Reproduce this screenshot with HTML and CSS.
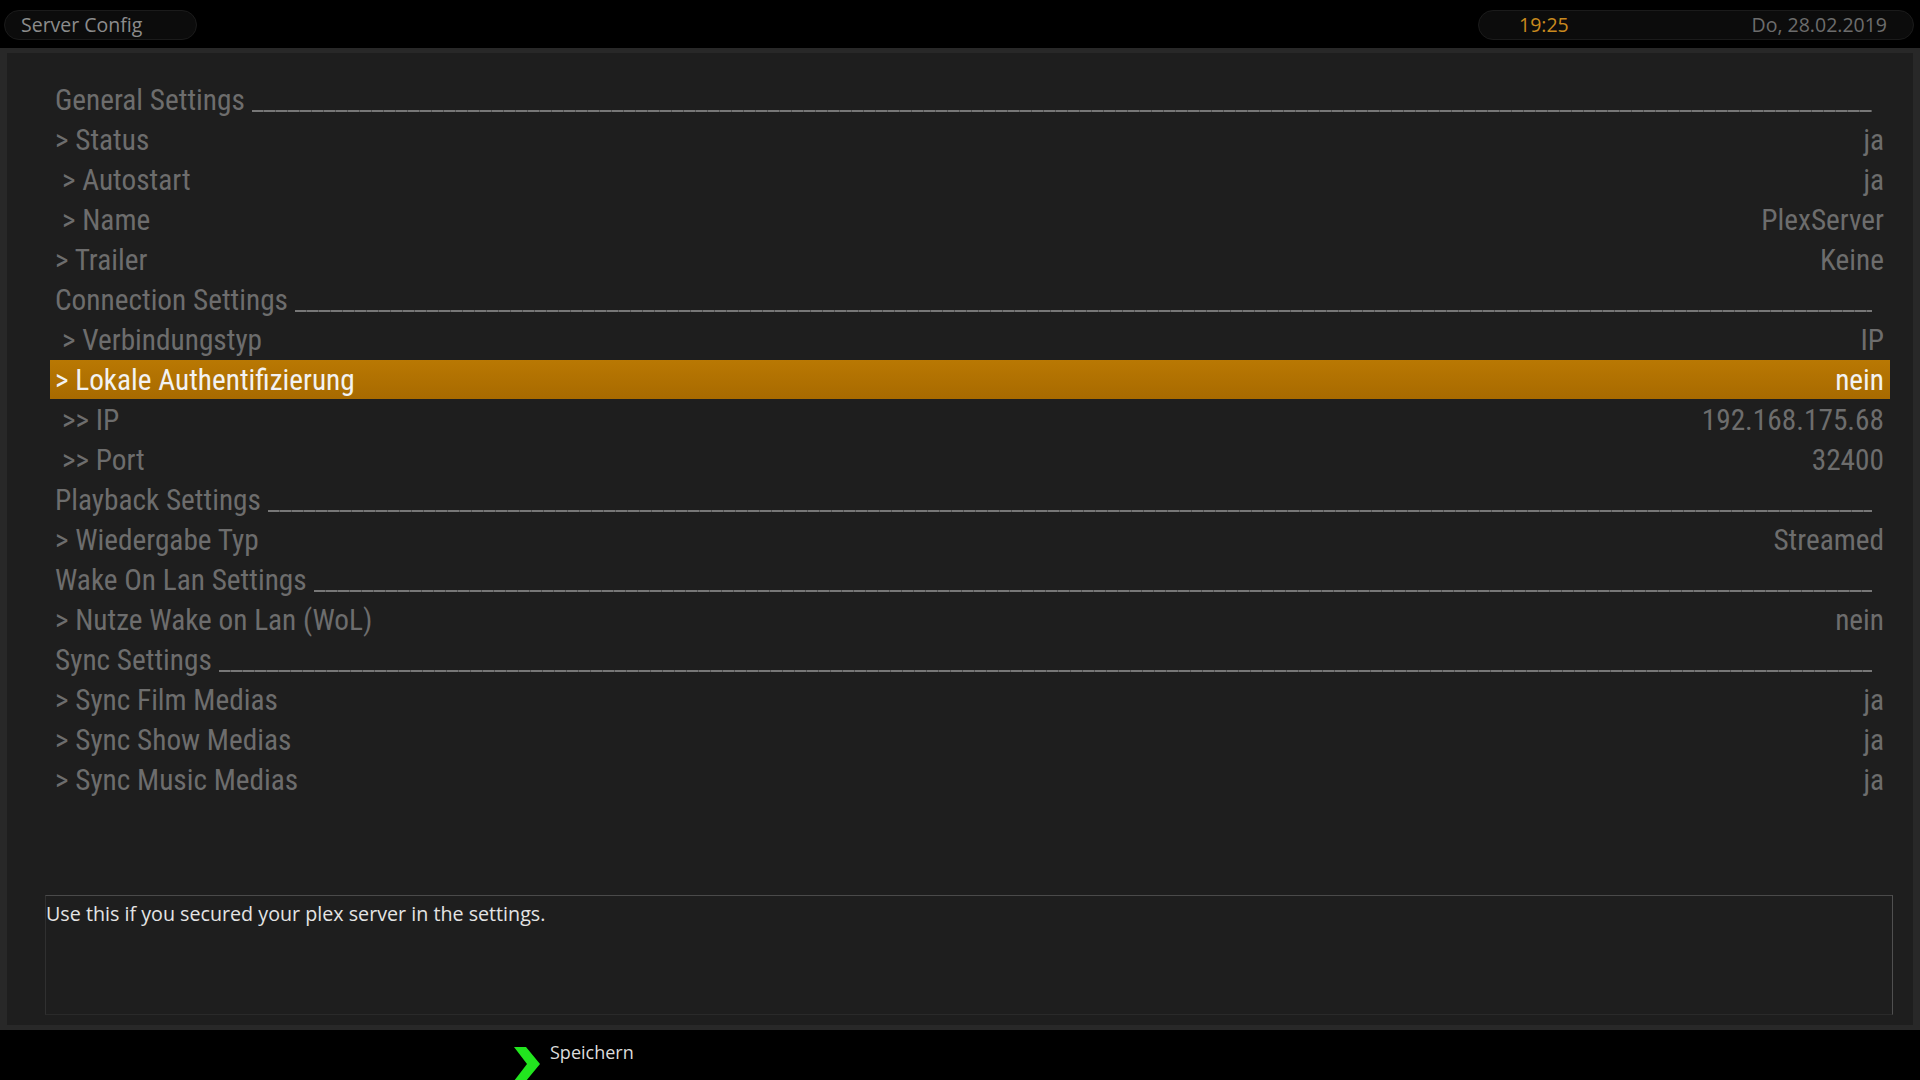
FILE: index.html
```html
<!DOCTYPE html>
<html>
	<head>
		<meta charset="UTF-8">
		<title>Server Config</title>
		<link rel="stylesheet" href="styles.css">
	</head>
	<body>
		<div class="top">
			<div class="pill title">Server Config</div>
			<div class="pill clock">
				<span class="time">19:25</span>
				<span class="date">Do, 28.02.2019</span>
			</div>
		</div>

		<div class="main">
			<div class="inner">
				<ul class="list">
					<li class="head"><span>General Settings</span><i></i></li>
					<li><span>&gt; Status</span><b>ja</b></li>
					<li class="sub"><span>&gt; Autostart</span><b>ja</b></li>
					<li class="sub"><span>&gt; Name</span><b>PlexServer</b></li>
					<li><span>&gt; Trailer</span><b>Keine</b></li>
					<li class="head"><span>Connection Settings</span><i></i></li>
					<li class="sub"><span>&gt; Verbindungstyp</span><b>IP</b></li>
					<li class="on"><span>&gt; Lokale Authentifizierung</span><b>nein</b></li>
					<li class="sub"><span>&gt;&gt; IP</span><b>192.168.175.68</b></li>
					<li class="sub"><span>&gt;&gt; Port</span><b>32400</b></li>
					<li class="head"><span>Playback Settings</span><i></i></li>
					<li><span>&gt; Wiedergabe Typ</span><b>Streamed</b></li>
					<li class="head"><span>Wake On Lan Settings</span><i></i></li>
					<li><span>&gt; Nutze Wake on Lan (WoL)</span><b>nein</b></li>
					<li class="head"><span>Sync Settings</span><i></i></li>
					<li><span>&gt; Sync Film Medias</span><b>ja</b></li>
					<li><span>&gt; Sync Show Medias</span><b>ja</b></li>
					<li><span>&gt; Sync Music Medias</span><b>ja</b></li>
				</ul>

				<div class="desc">Use this if you secured your plex server in the settings.</div>
			</div>
		</div>

		<div class="bottom">
			<svg class="arrow" width="26" height="36" viewBox="0 0 26 36">
				<polygon points="0,0 12,0 26,17 12,34 0,34 13,17" fill="#22e51f"/>
			</svg>
			<span class="save">Speichern</span>
		</div>
	</body>
</html>
```

FILE: styles.css
```css
html,body,ul,li{
	margin:0;
	padding:0;
}
li{
	list-style:none;
}
body{
	width:1920px;
	height:1080px;
	overflow:hidden;
	background:#000;
	font-family:"Open Sans","Noto Sans",sans-serif;
	display:flex;
	flex-direction:column;
}

/* top bar */
.top{
	height:48px;
	display:flex;
	justify-content:space-between;
	align-items:flex-start;
	padding:10px 6px 0 4px;
	box-sizing:border-box;
}
.pill{
	height:30px;
	box-sizing:border-box;
	border:1px solid #1b1b1b;
	background:#0c0c0c;
	border-radius:15px;
	font-size:19.5px;
	line-height:27px;
}
.title{
	width:193px;
	padding-left:16px;
	color:#8c8c8c;
}
.clock{
	width:436px;
	display:flex;
	justify-content:space-between;
	padding:0 26px 0 40px;
}
.clock .time{
	color:#c98a1e;
}
.clock .date{
	color:#6c6c6c;
}

/* main panel */
.main{
	height:982px;
	background:#282828;
	padding:5px 7px 5px 7px;
	box-sizing:border-box;
}
.inner{
	height:100%;
	background:#1e1e1e;
	display:flex;
	flex-direction:column;
	padding:27px 23px 10px 43px;
	box-sizing:border-box;
}
.list li{
	height:40px;
	display:flex;
	align-items:center;
	padding:0 6px 0 5px;
	font-family:"Roboto Condensed","Liberation Sans Narrow","DejaVu Sans Condensed",Roboto,sans-serif;
	font-stretch:condensed;
	font-size:29.3px;
	color:#6d6d6d;
	white-space:nowrap;
}
.list li span{
	flex:1;
}
.list li b{
	font-weight:normal;
}
.list .sub span{
	padding-left:7px;
}
.list .head span{
	flex:none;
}
.list .head i{
	flex:1;
	height:2px;
	margin:22px 12px 0 7px;
	background:repeating-linear-gradient(90deg,#777 0 11px,#555 11px 12px);
}
.list .on{
	background:linear-gradient(#b97803,#a86a00);
	color:#f2f2f2;
	height:39px;
	margin-bottom:1px;
}

/* help text */
.desc{
	margin:auto -3px 0 -5px;
	height:120px;
	box-sizing:border-box;
	border-top:1px solid #4a4a4a;
	border-right:1px solid #505050;
	border-left:1px solid #303030;
	border-bottom:1px solid #2a2a2a;
	padding-top:5px;
	font-size:19.7px;
	line-height:26px;
	color:#e4e4e4;
}

/* bottom bar */
.bottom{
	flex:1;
	display:flex;
	align-items:flex-start;
	padding-left:514px;
	overflow:hidden;
}
.arrow{
	margin-top:17px;
}
.save{
	margin:10px 0 0 10px;
	font-size:18px;
	color:#dcdcdc;
}
```
